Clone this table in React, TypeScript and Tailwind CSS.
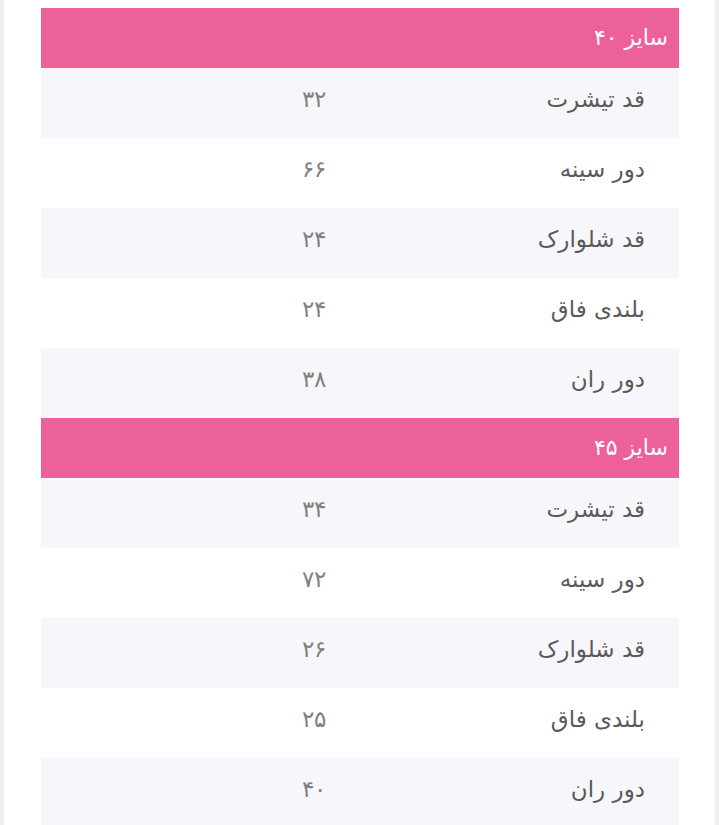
const sizes = [
  {
    title: "سایز ۴۰",
    rows: [
      ["قد تیشرت", "۳۲"],
      ["دور سینه", "۶۶"],
      ["قد شلوارک", "۲۴"],
      ["بلندی فاق", "۲۴"],
      ["دور ران", "۳۸"],
    ],
  },
  {
    title: "سایز ۴۵",
    rows: [
      ["قد تیشرت", "۳۴"],
      ["دور سینه", "۷۲"],
      ["قد شلوارک", "۲۶"],
      ["بلندی فاق", "۲۵"],
      ["دور ران", "۴۰"],
    ],
  },
];

export default function App() {
  return (
    <div
      dir="rtl"
      className="h-[825px] overflow-hidden bg-[#efeff1] px-[4px]"
      style={{ fontFamily: '"DejaVu Sans", "Noto Sans", sans-serif' }}
    >
      <div className="h-full bg-white pt-[8px] pr-[36px] pl-[37px]">
        {sizes.map((s) => (
          <div key={s.title}>
            <div className="flex h-[60px] items-center bg-[#ec6199] pr-[11px] pb-[2px] text-[22px] text-white">
              {s.title}
            </div>
            {s.rows.map(([label, value], i) => (
              <div
                key={label}
                className={
                  "grid h-[70px] grid-cols-2 items-center pb-[8px] text-[23px] " +
                  (i % 2 === 0 ? "bg-[#f7f7fb]" : "bg-white")
                }
              >
                <div className="pr-[34px] text-[#5a5a5a]">{label}</div>
                <div className="pr-[34px] font-light text-[#808080]">{value}</div>
              </div>
            ))}
          </div>
        ))}
      </div>
    </div>
  );
}
